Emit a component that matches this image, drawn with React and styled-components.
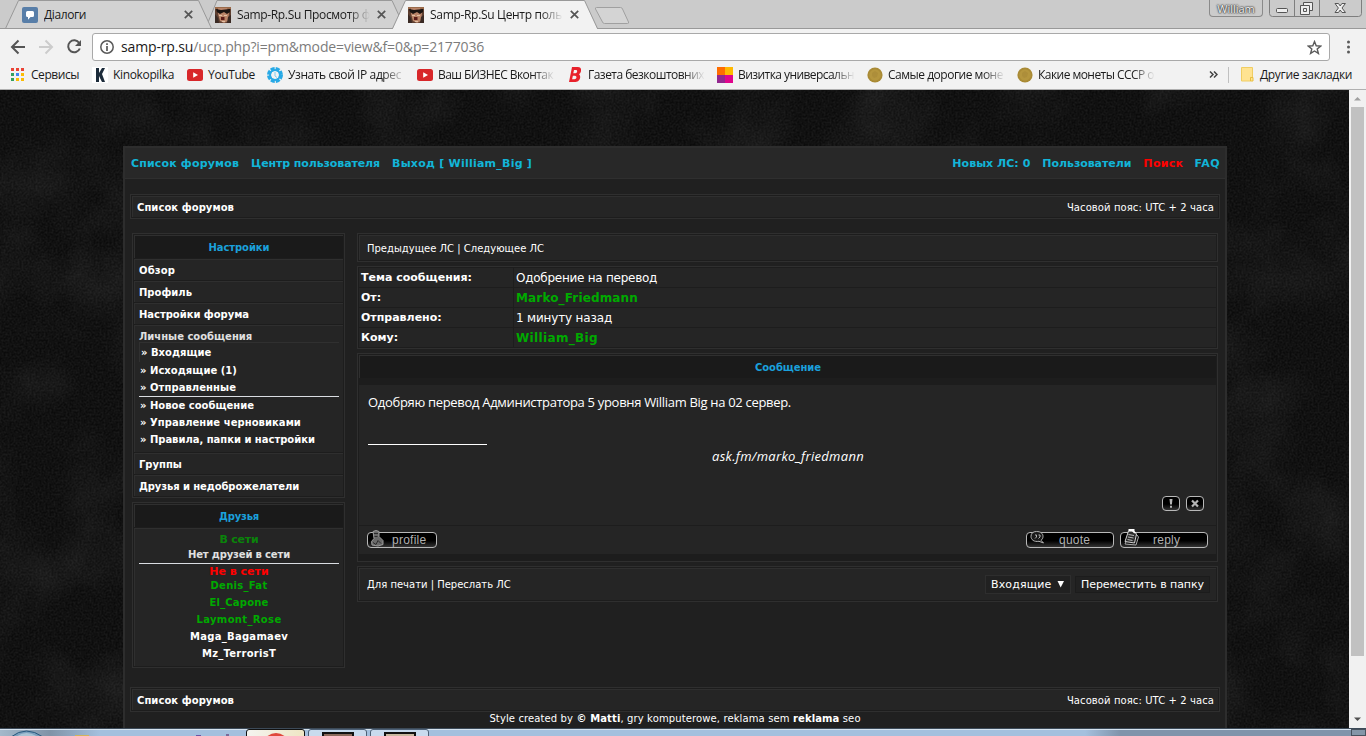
import styled, { createGlobalStyle, css } from "styled-components"

const GlobalStyle = createGlobalStyle`
  * {
    box-sizing: border-box;
  }

  body {
    margin: 0;
    overflow: hidden;
    background: #0f0f0f;
  }
`

const tabs = [
  { title: "Діалоги", icon: "vk", ls: -0.4 },
  { title: "Samp-Rp.Su Просмотр ф", icon: "face", ls: -0.35 },
  { title: "Samp-Rp.Su Центр поль", icon: "face", ls: -0.31 },
]

const bookmarks = [
  { title: "Сервисы", icon: "apps", width: 82, gap: 21, ls: -0.45 },
  { title: "Kinokopilka", icon: "kino", width: 95, gap: 21, ls: -0.35 },
  { title: "YouTube", icon: "tube", width: 80, gap: 21, ls: -0.33 },
  { title: "Узнать свой IP адрес", icon: "ip", width: 150, gap: 21, ls: -0.4, fade: true },
  { title: "Ваш БИЗНЕС Вконтак", icon: "tube", width: 150, gap: 21, ls: -0.56, fade: true },
  { title: "Газета безкоштовних", icon: "paper", width: 150, gap: 21, ls: -0.52, fade: true },
  { title: "Визитка универсальн", icon: "squares", width: 150, gap: 21, ls: -0.56, fade: true },
  { title: "Самые дорогие моне", icon: "coin", width: 150, gap: 21, ls: -0.49, fade: true },
  { title: "Какие монеты СССР о", icon: "coin", width: 138, gap: 21, ls: -0.54, fade: true },
]

const pmLinks = [
  [
    { title: "Исходящие (1)", ls: 0.03 },
    { title: "Отправленные", ls: 0.06 },
  ],
  [
    { title: "Новое сообщение", ls: 0.01 },
    { title: "Управление черновиками", ls: 0.05 },
    { title: "Правила, папки и настройки", ls: -0.02 },
  ],
]

const friends = [
  { name: "Denis_Fat", color: "#0a0", ls: 0.29 },
  { name: "El_Capone", color: "#0a0", ls: 0.19 },
  { name: "Laymont_Rose", color: "#0a0", ls: 0.35 },
  { name: "Maga_Bagamaev", color: "#fff", ls: 0.28 },
  { name: "Mz_TerrorisT", color: "#fff", ls: 0.26 },
]

const details = [
  { label: "Тема сообщения:", value: "Одобрение на перевод", ls: -0.26 },
  { label: "От:", value: "Marko_Friedmann", user: true, ls: 0.15 },
  { label: "Отправлено:", value: "1 минуту назад", ls: -0.17 },
  { label: "Кому:", value: "William_Big", user: true, ls: 0.35 },
]

function Icon({ name }) {
  switch (name) {
    case "vk":
      return (
        <svg width="16" height="16">
          <rect width="16" height="16" rx="2" fill="#587ea8" />
          <path d="M5.5 4h5a1.5 1.5 0 0 1 1.5 1.5v3A1.5 1.5 0 0 1 10.5 10H8.5L6 12.8V10h-.5A1.5 1.5 0 0 1 4 8.500v-3A1.500 1.500 0 0 1 5.500 4z" fill="#fff" />
        </svg>
      )
    case "face":
      return (
        <svg width="16" height="16">
          <rect width="16" height="16" fill="#5e3f30" />
          <path d="M0 0h16v2H0z" fill="#9a6a4a" />
          <path d="M3 1h9l2 5-1 8-4 2-4-2-2-7z" fill="#b98468" />
          <path d="M1 2l5 1 9-1v3l-3 2-3-2-4 2-3-2z" fill="#1a1311" />
          <path d="M6 10h3.500v3H6z" fill="#5a1c18" />
          <path d="M0 7l3 4 1 5H0zM13 10l3-2v8h-4z" fill="#3a2a24" />
          <path d="M4 8h3v1H4zM9 8h3v1H9zM7 14h3v1H7z" fill="#e3bfa4" />
        </svg>
      )
    case "apps":
      return (
        <svg width="14" height="13">
          {["#ea4335", "#ea4335", "#ea4335", "#34a060", "#4285f4", "#fbbc05", "#34a060", "#fbbc05", "#fbbc05"].map((fill, i) => (
            <rect key={i} x={1 + (i % 3) * 5} y={Math.floor(i / 3) * 5} width="3" height="3" fill={fill} />
          ))}
        </svg>
      )
    case "kino":
      return (
        <svg width="16" height="16">
          <rect width="16" height="16" fill="#fff" />
          <path d="M4 1h3v5l3-5h3l-3 6 3 8h-3L7 9v6H4z" fill="#1c2b3a" />
        </svg>
      )
    case "tube":
      return (
        <svg width="16" height="12">
          <rect width="16" height="12" rx="2.500" fill="#d8272a" />
          <path d="M6.200 3.200L11 6 6.200 8.800z" fill="#fff" />
        </svg>
      )
    case "ip":
      return (
        <svg width="16" height="16">
          <circle cx="8" cy="8" r="6" fill="none" stroke="#27a9e6" strokeWidth="4" strokeDasharray="3.700 1" />
          <circle cx="8" cy="8" r="5" fill="none" stroke="#27a9e6" strokeWidth="2" />
          <path d="M8 5v4l2 1.500" fill="none" stroke="#7ccdf2" strokeWidth="1" />
        </svg>
      )
    case "paper":
      return (
        <svg width="14" height="16">
          <path transform="translate(2 0)" fillRule="evenodd" d="M3 0h6c4 0 4 5 1 7.300 2.500 2 1 7.700-3.500 7.700H0zM5 3l-.7 3.200H6.500C8.500 6 8.700 3 7 3zM3.900 8.700l-.8 3.600H5.500C8 12 8 8.700 6 8.700z" fill="#e8212b" />
        </svg>
      )
    case "squares":
      return (
        <svg width="16" height="16">
          <path d="M0 0h8v8H0z" fill="#ff6d00" />
          <path d="M8 0h8v8H8z" fill="#ffb900" />
          <path d="M0 8h8v8H0z" fill="#93278f" />
          <path d="M8 8h8v8H8z" fill="#e0058c" />
        </svg>
      )
    case "coin":
      return (
        <svg width="16" height="16">
          <circle cx="8" cy="8" r="7.600" fill="#a98a35" />
          <circle cx="8" cy="8" r="5.800" fill="#b5963e" />
          <path d="M5 6l3-2 3 2-1 4-3 1-2-2z" fill="#ad8e3a" />
        </svg>
      )
    default:
      return null
  }
}

function TabShapes() {
  return (
    <Backdrop width="1366" height="29">
      <rect width="1366" height="29" fill="#cbcbcb" />
      <path d="M205.500 28.500L217 0.500h175l13 28z" fill="#d2d2d2" stroke="#999" />
      <path d="M5.500 28.500L18.500 0.500h180l13 28z" fill="#d2d2d2" stroke="#999" />
      <path d="M0 28.500h1366" stroke="#999" />
      <path d="M392.500 29.500L405.500 0.500h179l13 29z" fill="#f2f2f2" />
      <path d="M392.500 28.500L405.500 0.500h179l13 28" fill="none" stroke="#999" />
      <path d="M596.500 7.500h24q1.500 0 2 1.500l6 13q.5 1.500-1 1.500h-23q-1.500 0-2-1.500l-7-13q-.5-1.500 1-1.500z" fill="#d4d4d4" stroke="#a0a0a0" />
    </Backdrop>
  )
}

function WindowControls() {
  return (
    <Controls>
      <Profile>William</Profile>
      <svg width="93" height="18">
        <path d="M.5 0v13.500q0 3 3 3h86q3 0 3-3V0M25.500 0v16M50.500 0v16" fill="none" stroke="#7e7e7e" />
        <rect x="7.500" y="8.500" width="11" height="4" rx="1" fill="#eee" stroke="#555" />
        <g fill="#eee" stroke="#555">
          <path d="M34.500 2.500h9v8h-9z" />
          <path d="M31.500 5.500h9v9h-9z" />
          <path d="M34.500 8.500h3v3h-3z" />
        </g>
        <path d="M66 3.500h3.500l1.700 2.500 1.700-2.500h3.500L73 8l3.500 4.500H73L71.200 10l-1.700 2.500H66L69.400 8z" fill="#eee" stroke="#555" />
      </svg>
    </Controls>
  )
}

function Browser() {
  return (
    <Chrome>
      <TabStrip>
        <TabShapes />
        {tabs.map((tab, i) => (
          <Tab key={i}>
            <Icon name={tab.icon} />
            <TabTitle $fade={i > 0} $ls={tab.ls}>{tab.title}</TabTitle>
            <svg width="9" height="9">
              <path d="M.8.8l7.400 7.400M8.200.8L.8 8.200" stroke="#555" strokeWidth="1.700" />
            </svg>
          </Tab>
        ))}
        <WindowControls />
      </TabStrip>
      <AddressRow>
        <NavIcons width="92" height="32" fill="none" strokeWidth="2">
          <path d="M25 18H12.500M18.500 11.500L12 18l6.500 6.500" stroke="#555" />
          <path d="M39 18h12.500M45.500 11.500L52 18l-6.500 6.500" stroke="#ccc" />
          <path d="M79.200 14a6 6 0 1 0 .6 5.500" stroke="#555" />
          <path d="M81 11v6h-6z" fill="#555" />
        </NavIcons>
        <Omnibox>
          <svg width="14" height="14" fill="none" stroke="#5a5a5a">
            <circle cx="7" cy="7" r="6.200" strokeWidth="1.500" />
            <path d="M7 6v5M7 3.300v1.600" strokeWidth="1.700" />
          </svg>
          <Url>samp-rp.su<span>/ucp.php?i=pm&amp;mode=view&amp;f=0&amp;p=2177036</span></Url>
          <svg width="15" height="15" viewBox="0 0 15 15">
            <path d="M7.500 1.600l1.700 4.200 4.500.3-3.500 2.900 1.200 4.400-3.900-2.400-3.900 2.400 1.200-4.400L1.300 6.100l4.500-.3z" fill="none" stroke="#5a5a5a" strokeWidth="1.400" />
          </svg>
        </Omnibox>
        <svg width="36" height="32" fill="#5a5a5a">
          <circle cx="18.500" cy="13" r="1.500" />
          <circle cx="18.500" cy="18" r="1.500" />
          <circle cx="18.500" cy="23" r="1.500" />
        </svg>
      </AddressRow>
      <BookmarkBar>
        {bookmarks.map(({ title, icon, width, gap, ls, fade }) => (
          <Bookmark key={title} $width={width}>
            <IconSlot $width={gap}><Icon name={icon} /></IconSlot>
            <Fading $fade={fade} $ls={ls}>{title}</Fading>
          </Bookmark>
        ))}
        <Overflow width="9" height="7" fill="none" stroke="#444" strokeWidth="1.500">
          <path d="M1 .5l3 3-3 3M5 .5l3 3-3 3" />
        </Overflow>
        <Divider />
        <svg width="13" height="15">
          <path d="M.5.5h11v10l-2 0v3.500H.5z" fill="#ffe391" stroke="#f0cd62" />
          <path d="M9.500 10.500h2.500v3.500H9.500z" fill="#ffe391" stroke="#e9bf3f" />
        </svg>
        <Other>Другие закладки</Other>
      </BookmarkBar>
    </Chrome>
  )
}

function Breadcrumbs() {
  return (
    <Frame>
      <Crumbs>
        <Small $bold $ls={0.06}>Список форумов</Small>
        <Small $ls={0.09}>Часовой пояс: UTC + 2 часа</Small>
      </Crumbs>
    </Frame>
  )
}

function Sidebar() {
  return (
    <Side>
      <Frame>
        <Heading $ls={-0.07}>Настройки</Heading>
        <MenuCell $ls={0.13}>Обзор</MenuCell>
        <MenuCell>Профиль</MenuCell>
        <MenuCell $ls={-0.03}>Настройки форума</MenuCell>
        <PmCell>
          <PmTitle>Личные сообщения</PmTitle>
          <PmActive>» Входящие</PmActive>
          {pmLinks[0].map((link) => <PmLink key={link.title} $ls={link.ls}>» {link.title}</PmLink>)}
          <Rule />
          {pmLinks[1].map((link) => <PmLink key={link.title} $ls={link.ls}>» {link.title}</PmLink>)}
        </PmCell>
        <MenuCell>Группы</MenuCell>
        <MenuCell $ls={-0.1}>Друзья и недоброжелатели</MenuCell>
      </Frame>
      <Frame>
        <Heading $ls={-0.19}>Друзья</Heading>
        <FriendsCell>
          <Status $color="#0a840a" $ls={-0.21}>В сети</Status>
          <Nobody>Нет друзей в сети</Nobody>
          <Rule />
          <Status $color="#f00">Не в сети</Status>
          {friends.map((friend) => (
            <Friend key={friend.name} $color={friend.color} $ls={friend.ls}>{friend.name}</Friend>
          ))}
        </FriendsCell>
      </Frame>
    </Side>
  )
}

function ImageButton({ label, width, indent, children }) {
  return (
    <Pill $width={width} $indent={indent}>
      <PillIcon width="22" height="22">{children}</PillIcon>
      {label}
    </Pill>
  )
}

function Message() {
  return (
    <Main>
      <Frame>
        <Strip $h={25}>
          <Small>Предыдущее ЛС | Следующее ЛС</Small>
        </Strip>
      </Frame>
      <Frame>
        {details.map(({ label, value, user, ls }) => (
          <Detail key={label}>
            <DetailLabel>{label}</DetailLabel>
            <DetailValue $user={user} $ls={ls}>{value}</DetailValue>
          </Detail>
        ))}
      </Frame>
      <Frame>
        <Heading $ls={-0.07}>Сообщение</Heading>
        <Body>
          <Post>Одобряю перевод Администратора 5 уровня William Big на 02 сервер.</Post>
          <SignatureRule />
          <Signature>ask.fm/marko_friedmann</Signature>
          <Tools>
            <Square>
              <svg width="16" height="13"><path d="M6.500 2h3l-.6 5.500H7.100zM7 8.800h2v2H7z" fill="#b5b5b5" /></svg>
            </Square>
            <Square>
              <svg width="16" height="13"><path d="M5 3.500l6 6M11 3.500l-6 6" stroke="#b5b5b5" strokeWidth="2.200" /></svg>
            </Square>
          </Tools>
        </Body>
        <Actions>
          <ImageButton label="profile" width={70} indent={25}>
            <path d="M6 3.500q3-2 6 0v5l1 1 3 3v4l-5 1.500-6-1-.5-3.500 2.500-3z" fill="#6b6b6b" stroke="#9a9a9a" />
            <path d="M7 5.500h4M7.500 8.500h3M6 14.500l3 2 2-4 3 3" stroke="#2c2c2c" fill="none" />
          </ImageButton>
          <ImageButton label="quote" width={88} indent={33}>
            <path d="M10.500 3.500c4 0 6.500 1.800 6.500 4.800 0 2-.8 3.200-2 4l2.500 2.700-4.500-1.700c-5 .8-8-1.500-8-5 0-3 2-4.800 5.500-4.800z" fill="#1a1a1a" stroke="#b4b4b4" />
            <path d="M9 7h1.500v2L9 10.500M12.500 7H14v2l-1.500 1.500" stroke="#b4b4b4" fill="none" />
          </ImageButton>
          <ImageButton label="reply" width={88} indent={33}>
            <path d="M10 5l7 2 1.500 2L16 17l-11-1z" fill="#111" stroke="#aaa" />
            <path d="M8.500 3l5 0 3 3-2 9-9.500-1.500z" fill="#2c2c2c" stroke="#d0d0d0" />
            <path d="M8.500 6.500l5.500 1M8 9l5.500 1M7.500 11.500l5 1" stroke="#bbb" />
            <path d="M8.500 1h6v2.200l2 2h-2.500l-2-2H8.500z" fill="#fff" />
          </ImageButton>
        </Actions>
      </Frame>
      <Frame>
        <Strip $h={32}>
          <Small>Для печати | Переслать ЛС</Small>
          <FolderForm>
            <Select>
              Входящие
              <svg width="8" height="8"><path d="M.500 0h6.500L3.700 6.500z" fill="#fff" /></svg>
            </Select>
            <Move>Переместить в папку</Move>
          </FolderForm>
        </Strip>
      </Frame>
    </Main>
  )
}

function Forum() {
  return (
    <Wrapper>
      <TopNav>
        <NavLink $ls={0.16} $gap={12}>Список форумов</NavLink>
        <NavLink $ls={-0.1} $gap={12}>Центр пользователя</NavLink>
        <NavLink $ls={0.24}>Выход [ William_Big ]</NavLink>
        <Spacer />
        <NavLink $ls={0.03} $gap={12}>Новых ЛС: 0</NavLink>
        <NavLink $ls={-0.06} $gap={12}>Пользователи</NavLink>
        <NavLink $ls={0.31} $gap={11} $color="#f00">Поиск</NavLink>
        <NavLink $ls={0.5}>FAQ</NavLink>
      </TopNav>
      <Breadcrumbs />
      <Columns>
        <Sidebar />
        <Message />
      </Columns>
      <Breadcrumbs />
      <Copyright>Style created by <b>© Matti</b>, gry komputerowe, reklama sem <b>reklama</b> seo</Copyright>
    </Wrapper>
  )
}

// dark woven wall behind the forum
function Grain() {
  return (
    <Backdrop width="1349" height="638">
      <filter id="fine" x="0" y="0" width="100%" height="100%">
        <feTurbulence type="fractalNoise" baseFrequency="0.5" numOctaves="2" seed="4" />
        <feColorMatrix values="0 0 0 0 1  0 0 0 0 1  0 0 0 0 1  .12 0 0 0 -.035" />
      </filter>
      <filter id="coarse" x="0" y="0" width="100%" height="100%">
        <feTurbulence type="fractalNoise" baseFrequency="0.014" numOctaves="3" seed="9" />
        <feColorMatrix values="0 0 0 0 1  0 0 0 0 1  0 0 0 0 1  .12 0 0 0 -.05" />
      </filter>
      <rect width="1349" height="638" fill="#0b0b0b" />
      <rect width="1349" height="638" filter="url(#fine)" />
      <rect width="1349" height="638" filter="url(#coarse)" />
    </Backdrop>
  )
}

export default function App() {
  return (
    <Screen>
      <GlobalStyle />
      <Browser />
      <Viewport>
        <Page>
          <Grain />
          <Forum />
        </Page>
        <Scrollbar>
          <svg width="17" height="17"><path d="M5 10.500L8.500 7l3.500 3.500z" fill="#a0a0a0" /></svg>
          <Thumb />
          <Spacer />
          <svg width="17" height="17"><path d="M5 6.500h7L8.500 10z" fill="#505050" /></svg>
        </Scrollbar>
      </Viewport>
      <Taskbar>
        <svg width="246" height="8">
          <path d="M11 8Q26-4 43 8z" fill="#7ba0bd" stroke="#27577c" />
          <path d="M16 8Q26 0 38 8z" fill="#a9c3d4" />
          <path d="M75 6h14v2H75z" fill="#d2b45c" />
          <path d="M196 6h5v2h-5z" fill="#6a55a5" />
          <path d="M226 5h3v3h-3z" fill="#7a6a9a" />
        </svg>
        <TaskButton $width={59} $active>
          <svg width="28" height="7"><path d="M3 8Q14-2 25 8z" fill="#e0483c" /></svg>
        </TaskButton>
        <TaskButton $width={59}>
          <Thumbnail $color="#8b6a5c" />
        </TaskButton>
        <TaskButton $width={59}>
          <Thumbnail $color="#c9b8a0" />
        </TaskButton>
        <Spacer />
        <ShowDesktop />
      </Taskbar>
    </Screen>
  )
}

const verdana = css`
  font-family: "DejaVu Sans", Verdana, sans-serif;
`

const segoe = css`
  font-family: "Open Sans", "Noto Sans", sans-serif;
`

const spacing = css`
  letter-spacing: ${(p) => p.$ls || 0}px;
  white-space: pre;
`

const fadeOut = css`
  mask-image: linear-gradient(to right, #000 calc(100% - 22px), transparent);
`

const Screen = styled.div`
  width: 1366px;
  height: 736px;
  display: flex;
  flex-direction: column;
  overflow: hidden;
`

const Backdrop = styled.svg`
  position: absolute;
  left: 0;
  top: 0;
`

const Spacer = styled.div`
  flex: 1;
`

/* browser window */

const Chrome = styled.div`
  height: 90px;
  flex: none;
  background: #f2f2f2;
  border-bottom: 1px solid #b0b0b0;
  color: #1a1a1a;
  font-size: 12px;
  ${segoe}
`

const TabStrip = styled.div`
  position: relative;
  height: 29px;
  display: flex;
  padding-left: 22px;
`

const Tab = styled.div`
  position: relative;
  width: 193px;
  height: 29px;
  display: flex;
  align-items: center;
  padding-right: 22px;
`

const TabTitle = styled.span`
  width: 133px;
  margin: 0 7px 0 6px;
  overflow: hidden;
  ${spacing}
  ${(p) => p.$fade && fadeOut}
`

const Controls = styled.div`
  position: relative;
  display: flex;
  gap: 6px;
  margin-left: auto;
  margin-right: 4px;
`

const Profile = styled.div`
  width: 54px;
  height: 17px;
  border: 1px solid #8a8a8a;
  border-top: 0;
  border-radius: 0 0 4px 4px;
  color: #f4f4f4;
  font-size: 11px;
  line-height: 17px;
  text-align: center;
  text-shadow: 0 0 1px #333, 0 0 2px #333, 0 0 2px #444;
`

const AddressRow = styled.div`
  display: flex;
  height: 32px;
`

const NavIcons = styled.svg`
  flex: none;
`

const Omnibox = styled.div`
  flex: 1;
  height: 28px;
  margin-top: 4px;
  padding: 0 7px;
  display: flex;
  align-items: center;
  background: #fff;
  border: 1px solid #a9a9a9;
  border-radius: 3px;
`

const Url = styled.span`
  flex: 1;
  margin-left: 7px;
  font-size: 14px;
  line-height: 24px;
  letter-spacing: -0.15px;

  span {
    color: #7c7c7c;
  }
`

const BookmarkBar = styled.div`
  display: flex;
  align-items: center;
  height: 27px;
  padding-left: 10px;
`

const Bookmark = styled.div`
  display: flex;
  align-items: center;
  flex: none;
  width: ${(p) => p.$width}px;
`

const IconSlot = styled.div`
  display: flex;
  flex: none;
  width: ${(p) => p.$width}px;
`

const Fading = styled.span`
  width: 117px;
  line-height: 17px;
  ${spacing}
  ${(p) => p.$fade && fadeOut}
`

const Overflow = styled.svg`
  margin-left: 54px;
`

const Divider = styled.div`
  width: 1px;
  height: 16px;
  margin: 0 12px 0 10px;
  background: #c0c0c0;
`

const Other = styled.span`
  margin-left: 6px;
  line-height: 17px;
  letter-spacing: -0.34px;
  white-space: pre;
`

const Viewport = styled.div`
  height: 638px;
  flex: none;
  display: flex;
`

const Page = styled.div`
  position: relative;
  width: 1349px;
  height: 638px;
  overflow: hidden;
`

const Scrollbar = styled.div`
  width: 17px;
  background: #f1f1f1;
  display: flex;
  flex-direction: column;
  align-items: center;
`

const Thumb = styled.div`
  width: 13px;
  height: 549px;
  background: #c1c1c1;
`

/* forum */

const Wrapper = styled.div`
  position: relative;
  width: 1104px;
  height: 620px;
  margin: 56px 0 0 123px;
  padding: 0 5px;
  background: #202020;
  border: 2px solid #2d2d2d;
  ${verdana}
`

const TopNav = styled.div`
  display: flex;
  align-items: center;
  height: 31px;
  margin: 0 -5px 15px;
  padding: 0 5px 0 6px;
  background: #282828;
  border-bottom: 1px solid #2f2f2f;
`

const NavLink = styled.span`
  margin-right: ${(p) => p.$gap || 0}px;
  color: ${(p) => p.$color || "#12b5d8"};
  font-size: 11px;
  font-weight: 700;
  ${spacing}
`

const Frame = styled.div`
  display: flex;
  flex-direction: column;
  gap: 1px;
  padding: 1px;
  background: #1d1d1d;
  border: 1px solid #2f2f2f;
`

const cell = css`
  background: #252525;
  border: 1px solid #2f2f2f;
  border-width: 1px 0 0 1px;
`

const Crumbs = styled.div`
  display: flex;
  justify-content: space-between;
  height: 21px;
  padding: 0 4px;
  line-height: 21px;
  ${cell}
`

const Small = styled.span`
  color: #fff;
  font-size: 10px;
  font-weight: ${(p) => (p.$bold ? 700 : 400)};
  ${spacing}
`

const Columns = styled.div`
  display: flex;
  gap: 12px;
  height: 454px;
  margin: 14px 2px 0;
`

const Side = styled.div`
  width: 213px;
  display: flex;
  flex-direction: column;
  gap: 4px;
`

const Heading = styled.div`
  height: 23px;
  background: #1a1a1a;
  border: 1px solid #2f2f2f;
  border-width: 1px 0 0 1px;
  color: #1aa0dc;
  font-size: 10px;
  font-weight: 700;
  line-height: 23px;
  text-align: center;
  ${spacing}
`

const MenuCell = styled.div`
  height: 21px;
  padding-left: 4px;
  color: #fff;
  font-size: 10px;
  font-weight: 700;
  line-height: 21px;
  ${cell}
  ${spacing}
`

const PmCell = styled.div`
  height: 127px;
  padding: 3px 4px 0;
  font-size: 10px;
  font-weight: 700;
  ${cell}
`

const PmTitle = styled.div`
  height: 13px;
  color: #e0e0e0;
  line-height: 15px;
`

const PmActive = styled.div`
  height: 20px;
  padding-left: 1px;
  border: 1px solid #303030;
  border-width: 1px 0 0 1px;
  color: #fff;
  line-height: 19px;
`

const PmLink = styled.div`
  height: 17px;
  color: #fff;
  padding-left: 1px;
  line-height: 17px;
  ${spacing}
`

const Rule = styled.div`
  height: 1px;
  background: #dadde2;
`

const FriendsCell = styled.div`
  height: 138px;
  padding: 3px 4px 0;
  text-align: center;
  font-size: 10px;
  font-weight: 700;
  ${cell}
`

const Status = styled.div`
  height: 15px;
  color: ${(p) => p.$color};
  font-size: 11px;
  line-height: 15px;
  ${spacing}
`

const Nobody = styled.div`
  height: 16px;
  color: #e0e0e0;
  line-height: 16px;
  letter-spacing: -0.15px;
`

const Friend = styled.div`
  height: 17px;
  color: ${(p) => p.$color};
  line-height: 13px;
  ${spacing}
`

const Main = styled.div`
  flex: 1;
  display: flex;
  flex-direction: column;
  gap: 4px;
`

const Strip = styled.div`
  display: flex;
  align-items: center;
  justify-content: space-between;
  height: ${(p) => p.$h}px;
  padding: 0 6px 0 7px;
  ${cell}
`

const Detail = styled.div`
  display: flex;
  gap: 1px;
  height: 19px;
  color: #fff;
  line-height: 20px;
  white-space: pre;
`

const DetailLabel = styled.div`
  width: 154px;
  padding-left: 2px;
  background: #252525;
  font-size: 11px;
  font-weight: 700;
`

const DetailValue = styled.div`
  flex: 1;
  padding-left: 2px;
  background: #252525;
  color: ${(p) => (p.$user ? "#0a0" : "#fff")};
  font-size: 12px;
  font-weight: ${(p) => (p.$user ? 700 : 400)};
  ${spacing}
`

const Body = styled.div`
  height: 140px;
  margin-top: 6px;
  padding: 8px 8px 0 9px;
  display: flex;
  flex-direction: column;
  background: #252525;
  color: #fff;
  font-size: 13px;
  ${segoe}
`

const Post = styled.div`
  height: 51px;
  line-height: 18px;
  letter-spacing: -0.31px;
`

const SignatureRule = styled.div`
  width: 119px;
  height: 1px;
  background: #fff;
`

const Signature = styled.div`
  margin-top: 2px;
  text-align: center;
  font-style: italic;
  line-height: 18px;
  letter-spacing: 0.31px;
`

const Tools = styled.div`
  display: flex;
  gap: 6px;
  justify-content: flex-end;
  margin: 31px 4px 0 0;
`

const blackGloss = css`
  background: linear-gradient(#000 55%, #333);
  border: 1px solid #b8b8b8;
  border-radius: 4px;
`

const Square = styled.div`
  display: flex;
  width: 18px;
  height: 15px;
  ${blackGloss}
`

const Actions = styled.div`
  display: flex;
  gap: 6px;
  height: 28px;
  margin-bottom: 6px;
  padding: 6px 8px 0;
  background: #252525;

  > :first-child {
    margin-right: auto;
  }
`

const Pill = styled.div`
  position: relative;
  width: ${(p) => p.$width}px;
  height: 16px;
  padding-left: ${(p) => p.$indent - 1}px;
  color: #b0b0b0;
  font: 12px/14px "Liberation Sans", Arial, sans-serif;
  letter-spacing: 0.25px;
  ${blackGloss}
`

const PillIcon = styled.svg`
  position: absolute;
  left: -1px;
  top: -5px;
`

const FolderForm = styled.div`
  display: flex;
  align-items: center;
  gap: 4px;
  color: #fff;
  font-size: 11px;
  white-space: pre;
`

const Select = styled.div`
  display: flex;
  align-items: center;
  justify-content: space-between;
  width: 86px;
  height: 19px;
  padding: 0 5px;
  background: #212121;
  border: 1px solid #2e2e2e;
  letter-spacing: 0.15px;
`

const Move = styled.div`
  width: 135px;
  height: 17px;
  background: #212121;
  border: 1px solid #1c1c1c;
  line-height: 15px;
  text-align: center;
  letter-spacing: -0.06px;
`

const Copyright = styled.div`
  color: #fff;
  font-size: 10px;
  line-height: 13px;
  letter-spacing: 0.12px;
  text-align: center;
  white-space: pre;
`

/* taskbar */

const Taskbar = styled.div`
  display: flex;
  gap: 3px;
  height: 8px;
  flex: none;
  border-top: 1px solid #3c4a58;
  background: linear-gradient(to right, #a4b9cb, #8093a7 50px, #a4c0de 100px, #a4c0de 1085px, #8094ab 1120px);
  box-shadow: inset 0 1px #d5e2ee;

  > :first-child {
    margin-right: -3px;
  }
`

const TaskButton = styled.div`
  width: ${(p) => p.$width}px;
  height: 12px;
  padding-top: ${(p) => (p.$active ? 0 : 2)}px;
  display: flex;
  justify-content: center;
  background: ${(p) => (p.$active ? "linear-gradient(to right, #f4f4f0, #efe6c4)" : "#c9dbee")};
  border: 1px solid ${(p) => (p.$active ? "#111" : "#4d6075")};
  border-radius: 3px 3px 0 0;
`

const Thumbnail = styled.div`
  width: 32px;
  height: 10px;
  background: ${(p) => p.$color};
  border: 2px solid #111;
`

const ShowDesktop = styled.div`
  width: 15px;
  background: #8496a8;
  border: 1px solid #47525e;
`
